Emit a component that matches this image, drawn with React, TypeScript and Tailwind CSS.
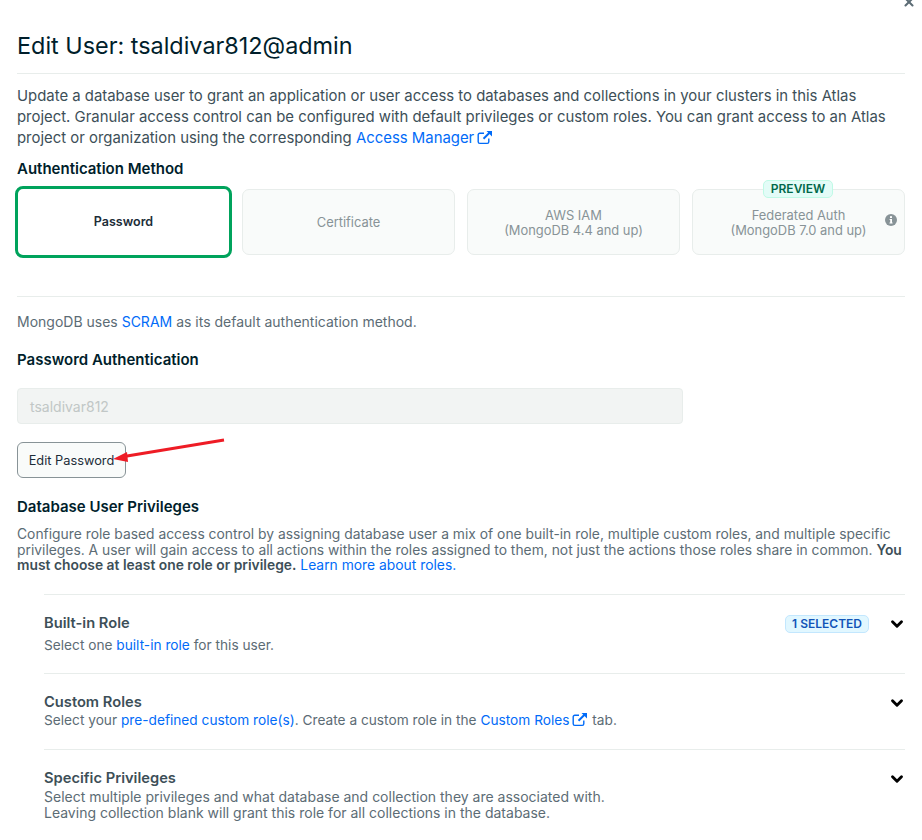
import { ChevronDown, X } from 'lucide-react'

const font = { fontFamily: 'Inter, sans-serif' }

function Ext() {
  return (
    <svg width="16" height="15" viewBox="0 0 16 15" fill="none" stroke="currentColor" className="inline-block ml-[3px] -mt-[3px]">
      <path d="M7 3.2H2.8a1.6 1.6 0 0 0-1.6 1.6v7a1.6 1.6 0 0 0 1.6 1.6h7.4a1.6 1.6 0 0 0 1.6-1.6V8.5" strokeWidth="1.4" />
      <path d="M6.5 8.8L13 2.3" strokeWidth="2" />
      <path d="M9.5 1h5.5v5.5z" fill="currentColor" stroke="none" />
    </svg>
  )
}

function Link({ children }: { children: React.ReactNode }) {
  return <a className="text-[#016bf8]">{children}</a>
}

function MethodCard({ lines }: { lines: string[] }) {
  return (
    <div className="relative w-[213px] h-[66px] pt-px flex flex-col items-center justify-center rounded-[7px] border border-[#e8edeb] bg-[#f9fbfa] text-[#889397] text-[12.9px] leading-[15px]">
      {lines.map(l => <span key={l}>{l}</span>)}
    </div>
  )
}

function Role({ title, children, badge, className }: { title: string; children: React.ReactNode; badge?: boolean; className: string }) {
  return (
    <div className={`border-t border-[#e8edeb] ${className}`}>
      <div className="flex items-center justify-between h-[20px]">
        <h3 className="text-[14.7px] font-semibold text-[#3d4f58]">{title}</h3>
        <div className="flex items-center">
          {badge && (
            <span className="mr-[19px] h-[18px] px-[6px] flex items-center rounded-[5px] border border-[#c3e7fe] bg-[#e1f7ff] text-[#1254b7] text-[12px] font-semibold">
              1 SELECTED
            </span>
          )}
          <ChevronDown size={18} strokeWidth={3.8} className="text-black -mr-[1px]" />
        </div>
      </div>
      <div className="text-[13.7px] leading-[16px] text-[#5c6c75]">{children}</div>
    </div>
  )
}

export default function App() {
  return (
    <div className="relative w-[922px] h-[840px] overflow-hidden bg-white pl-[17px] pr-[17px] whitespace-nowrap" style={font}>
      <X size={14} strokeWidth={3.5} className="absolute right-[6px] -top-[5px] text-[#5c6c75]" />

      <h1 className="pt-[31px] h-[73px] text-[23.4px] leading-[30px] text-[#001e2b]">Edit User: tsaldivar812@admin</h1>
      <div className="border-t border-[#e8edeb]" />

      <p className="mt-[12px] text-[14.9px] leading-[21px] text-[#3d4f58]">
        Update a database user to grant an application or user access to databases and collections in your clusters in this Atlas<br />
        project. Granular access control can be configured with default privileges or custom roles. You can grant access to an Atlas<br />
        project or organization using the corresponding <Link>Access Manager<Ext /></Link>
      </p>

      <h2 className="mt-[10px] text-[15px] leading-[20px] font-semibold text-[#001e2b]">Authentication Method</h2>

      <div className="mt-[7px] flex items-center gap-[12px]">
        <div className="-ml-[2px] w-[218px] h-[72px] pt-px flex items-center justify-center rounded-[8px] border-[3px] border-[#00a35c] bg-white text-[12.5px] font-semibold text-[#1c2d38]">
          Password
        </div>
        <div className="flex gap-[12px] -ml-[2px]">
          <MethodCard lines={['Certificate']} />
          <MethodCard lines={['AWS IAM', '(MongoDB 4.4 and up)']} />
          <MethodCard lines={['Federated Auth', '(MongoDB 7.0 and up)']} />
        </div>
      </div>

      {/* badge and info icon over the last card */}
      <span className="absolute left-[763px] top-[180px] h-[18px] w-[70px] flex items-center justify-center rounded-[5px] border border-[#c0fae6] bg-[#e3fcf7] text-[#00684a] text-[12px] font-semibold">
        PREVIEW
      </span>
      <svg className="absolute left-[885px] top-[214px]" width="12" height="12" viewBox="0 0 12 12">
        <circle cx="6" cy="6" r="6" fill="#889397" />
        <rect x="5" y="2.2" width="2" height="1.8" fill="#fff" />
        <path d="M4.6 5h2.4v3.6h.6v1H4.5v-1h.7V6h-.6z" fill="#fff" />
      </svg>

      <div className="mt-[38px] border-t border-[#e8edeb]" />

      <p className="mt-[15px] text-[14px] leading-[20px] text-[#5c6c75]">
        MongoDB uses <Link>SCRAM</Link> as its default authentication method.
      </p>

      <h2 className="mt-[18px] text-[15px] leading-[20px] font-semibold text-[#001e2b]">Password Authentication</h2>

      <div className="mt-[18px] w-[666px] h-[36px] flex items-center px-[12px] rounded-[4px] border border-[#e8edeb] bg-[#f2f4f3] text-[14px] text-[#c1c7c6]">
        tsaldivar812
      </div>

      <button className="mt-[18px] block w-[109px] h-[36px] pt-px rounded-[6px] border border-[#889397] bg-[#f9fbfa] text-[12.8px] text-[#1c2d38]">
        Edit Password
      </button>

      <svg className="absolute left-[110px] top-[436px]" width="116" height="28" viewBox="0 0 116 28">
        <path d="M114 4 L14 20.5" stroke="#ee1c25" strokeWidth="2.8" fill="none" />
        <path d="M3 23 L17 16 L18 26 Z" fill="#ee1c25" />
      </svg>

      <h2 className="mt-[19px] text-[15px] leading-[20px] font-semibold text-[#001e2b]">Database User Privileges</h2>

      <p className="mt-[10px] text-[13.85px] leading-[15.5px] text-[#5c6c75]">
        Configure role based access control by assigning database user a mix of one built-in role, multiple custom roles, and multiple specific<br />
        privileges. A user will gain access to all actions within the roles assigned to them, not just the actions those roles share in common. <b className="text-[#3d4f58] font-semibold">You</b><br />
        <b className="text-[#3d4f58] font-semibold">must choose at least one role or privilege.</b> <Link>Learn more about roles.</Link>
      </p>

      <div className="ml-[27px] mt-[20px]">
        <Role title="Built-in Role" badge className="pt-[19px] h-[79px]">
          <div className="mt-[3px]">Select one <Link>built-in role</Link> for this user.</div>
        </Role>
        <Role title="Custom Roles" className="pt-[19px] h-[76px]">
          <div className="-mt-px">
            Select your <Link>pre-defined custom role(s)</Link>. Create a custom role in the <Link>Custom Roles<Ext /></Link> tab.
          </div>
        </Role>
        <Role title="Specific Privileges" className="pt-[19px]">
          <div className="text-[14px]">
            Select multiple privileges and what database and collection they are associated with.<br />
            Leaving collection blank will grant this role for all collections in the database.
          </div>
        </Role>
      </div>
    </div>
  )
}
